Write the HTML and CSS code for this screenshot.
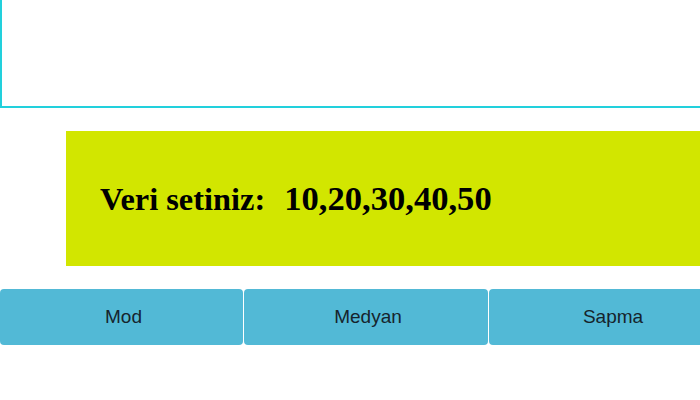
FILE: index.html
```html
<!DOCTYPE html>
<html lang="tr">
<head>
<meta charset="utf-8">
<title>Veri</title>
<link rel="stylesheet" href="styles.css">
</head>
<body>
<div class="page">
  <div class="top-box"></div>
  <div class="data-box"><h2 class="data-text">Veri setiniz:<span class="data-values">10,20,30,40,50</span></h2></div>
  <div class="buttons">
    <button class="btn">Mod</button>
    <button class="btn">Medyan</button>
    <button class="btn">Sapma</button>
  </div>
</div>
</body>
</html>
```
FILE: styles.css
```css
html, body {
  margin: 0;
  padding: 0;
  background: #ffffff;
  overflow: hidden;
}
.page {
  width: 740px;
  display: flex;
  flex-direction: column;
}
.top-box {
  height: 106px;
  border-left: 2px solid #22d0dc;
  border-bottom: 2px solid #22d0dc;
}
.data-box {
  margin-top: 23px;
  margin-left: 66px;
  height: 135px;
  background: #d2e600;
  display: flex;
  align-items: center;
  padding-left: 34px;
}
.data-text {
  margin: 0;
  font-family: "Liberation Serif", "Times New Roman", serif;
  font-weight: bold;
  font-size: 32.4px;
  color: #000;
  display: flex;
  align-items: baseline;
}
.data-values {
  font-size: 34.6px;
  margin-left: 19px;
}
.buttons {
  margin-top: 23px;
  display: flex;
  gap: 1px;
}
.btn {
  width: 244px;
  height: 56px;
  flex: none;
  border: none;
  border-radius: 4px;
  background: #52b9d6;
  color: #16242c;
  font-family: "Liberation Sans", Arial, sans-serif;
  font-size: 19px;
  padding: 0 0 0 4px;
}
.btn:first-child {
  width: 243px;
}
```
